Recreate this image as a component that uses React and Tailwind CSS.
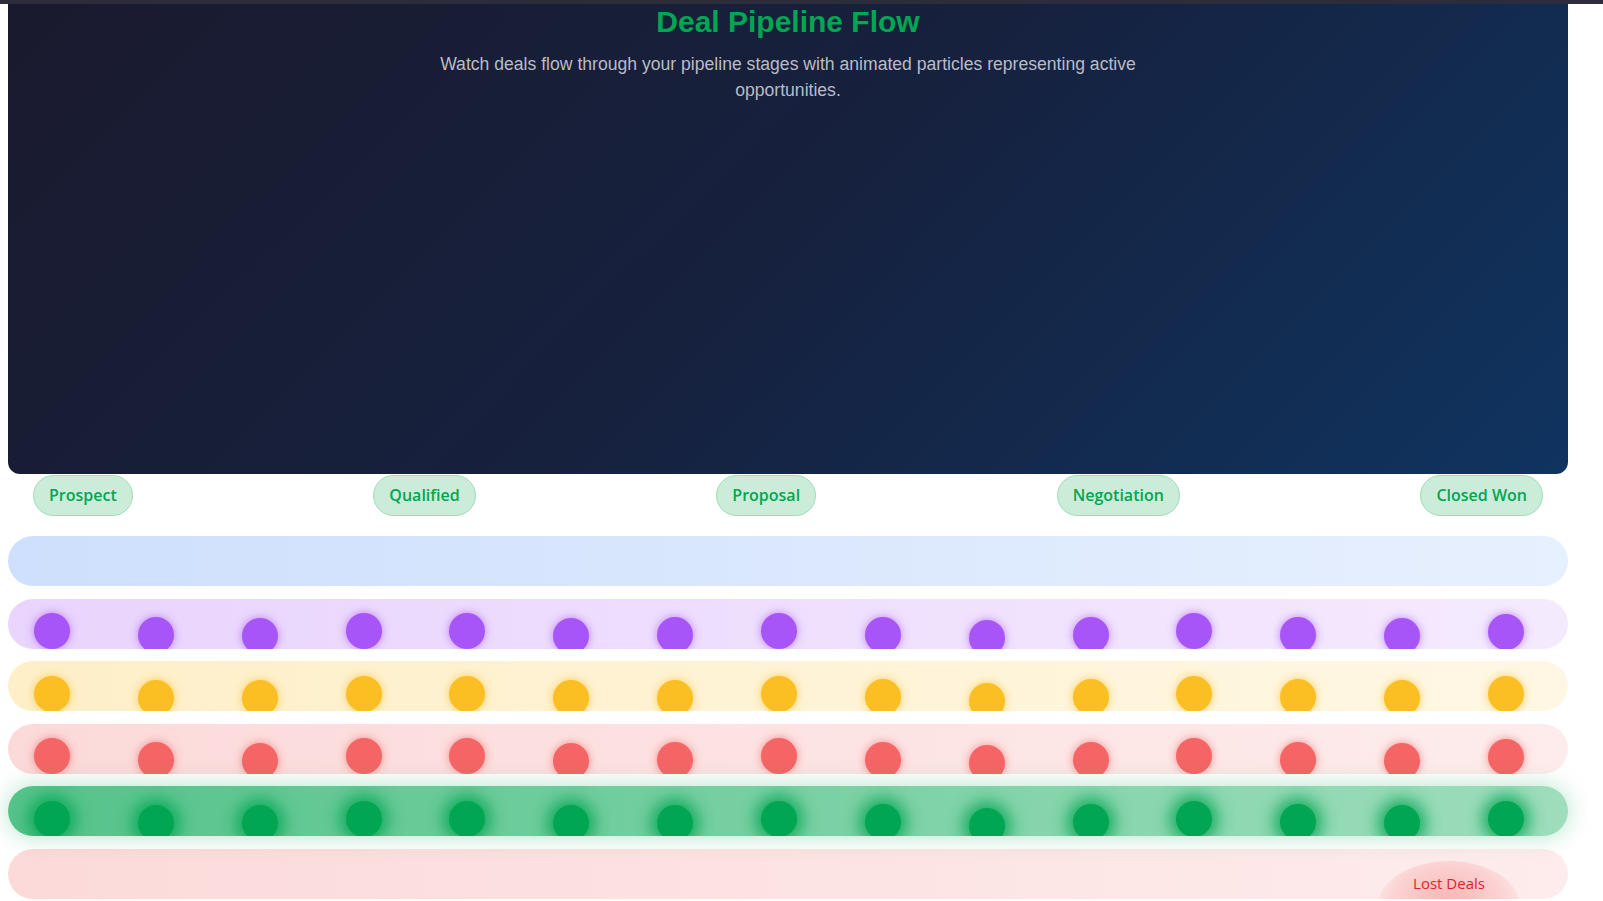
import React from 'react'

const STAGES = ['Prospect', 'Qualified', 'Proposal', 'Negotiation', 'Closed Won']

// vertical offset of each particle inside its lane
const OFFS = ['mt-[14.5px]','mt-[18.5px]','mt-[19px]','mt-[14.5px]','mt-[14.5px]','mt-[19px]','mt-[18.5px]','mt-[14.5px]','mt-[18px]','mt-[21.5px]','mt-[18px]','mt-[14.5px]','mt-[18px]','mt-[19px]','mt-[15px]']

const LANES = [
  { key:'purple', bar:'bg-[linear-gradient(90deg,rgba(168,85,247,0.25),rgba(168,85,247,0.12))]', dot:'bg-[#a855f7] shadow-[0_0_8px_rgba(168,85,247,0.7)]' },
  { key:'yellow', bar:'bg-[linear-gradient(90deg,rgba(251,191,36,0.25),rgba(251,191,36,0.12))]', dot:'bg-[#fbbf24] shadow-[0_0_8px_rgba(251,191,36,0.7)]' },
  { key:'red',    bar:'bg-[linear-gradient(90deg,rgba(239,68,68,0.2),rgba(239,68,68,0.1))]',     dot:'bg-[#f56565] shadow-[0_0_8px_rgba(245,101,101,0.7)]' },
  { key:'green',  bar:'bg-[linear-gradient(90deg,rgba(0,166,81,0.67),rgba(0,166,81,0.38))] shadow-[0_0_25px_rgba(0,166,81,0.3)]', dot:'bg-[#00a651] shadow-[0_0_16px_6px_rgba(0,166,81,0.85)]' },
]

function Lane({ bar, dot }) {
  return (
    <div className={`h-[50px] rounded-full overflow-hidden flex items-start pl-[26px] gap-[67.86px] ${bar}`}>
      {OFFS.map((m, i) => (
        <div key={i} className={`w-9 h-9 rounded-full shrink-0 ${m} ${dot}`} />
      ))}
    </div>
  )
}

export default function App() {
  return (
    <div className="min-h-screen bg-white font-['Liberation_Sans',Arial,sans-serif]">
      <div className="h-[4px] bg-[#2c2c3a]" />
      <div className="w-[1560px] ml-2">
        <div className="h-[470px] rounded-b-xl bg-[linear-gradient(135deg,#1a1a2e_0%,#16213e_50%,#0f3460_100%)] flex flex-col items-center">
          <h1 className="text-[30px] leading-[36px] font-bold text-[#00a651]">Deal Pipeline Flow</h1>
          <p className="mt-[11px] max-w-[700px] text-center text-[17.6px] leading-[26.4px] text-[#b8bcc6]">
            Watch deals flow through your pipeline stages with animated particles representing active opportunities.
          </p>
        </div>

        <div className="mt-px flex justify-between px-[25px] font-['Open_Sans',sans-serif]">
          {STAGES.map(s => (
            <span key={s} className="px-[15px] py-2 rounded-full border border-[#9fdcb9] bg-[#ccecda] text-[#00a651] text-base leading-[23px] font-semibold">
              {s}
            </span>
          ))}
        </div>

        <div className="mt-[20px] flex flex-col gap-[12.6px]">
          <div className="h-[50px] rounded-full bg-[linear-gradient(90deg,rgba(59,130,246,0.25),rgba(59,130,246,0.12))]" />
          {LANES.map(l => <Lane key={l.key} bar={l.bar} dot={l.dot} />)}
          <div className="h-[50px] rounded-full overflow-hidden flex justify-end items-start pr-[48px] pt-[12px] bg-[linear-gradient(90deg,rgba(239,68,68,0.2),rgba(239,68,68,0.1))]">
            <div className="w-[142px] h-[90px] rounded-[50%] flex justify-center pt-[12px] bg-[radial-gradient(ellipse_at_50%_45%,rgba(239,68,68,0.32),rgba(239,68,68,0.14)_55%,rgba(239,68,68,0.04)_72%,transparent_75%)]">
              <span className="font-['Open_Sans',sans-serif] text-[15px] leading-5 text-[#e02424]">Lost Deals</span>
            </div>
          </div>
        </div>
      </div>
    </div>
  )
}
